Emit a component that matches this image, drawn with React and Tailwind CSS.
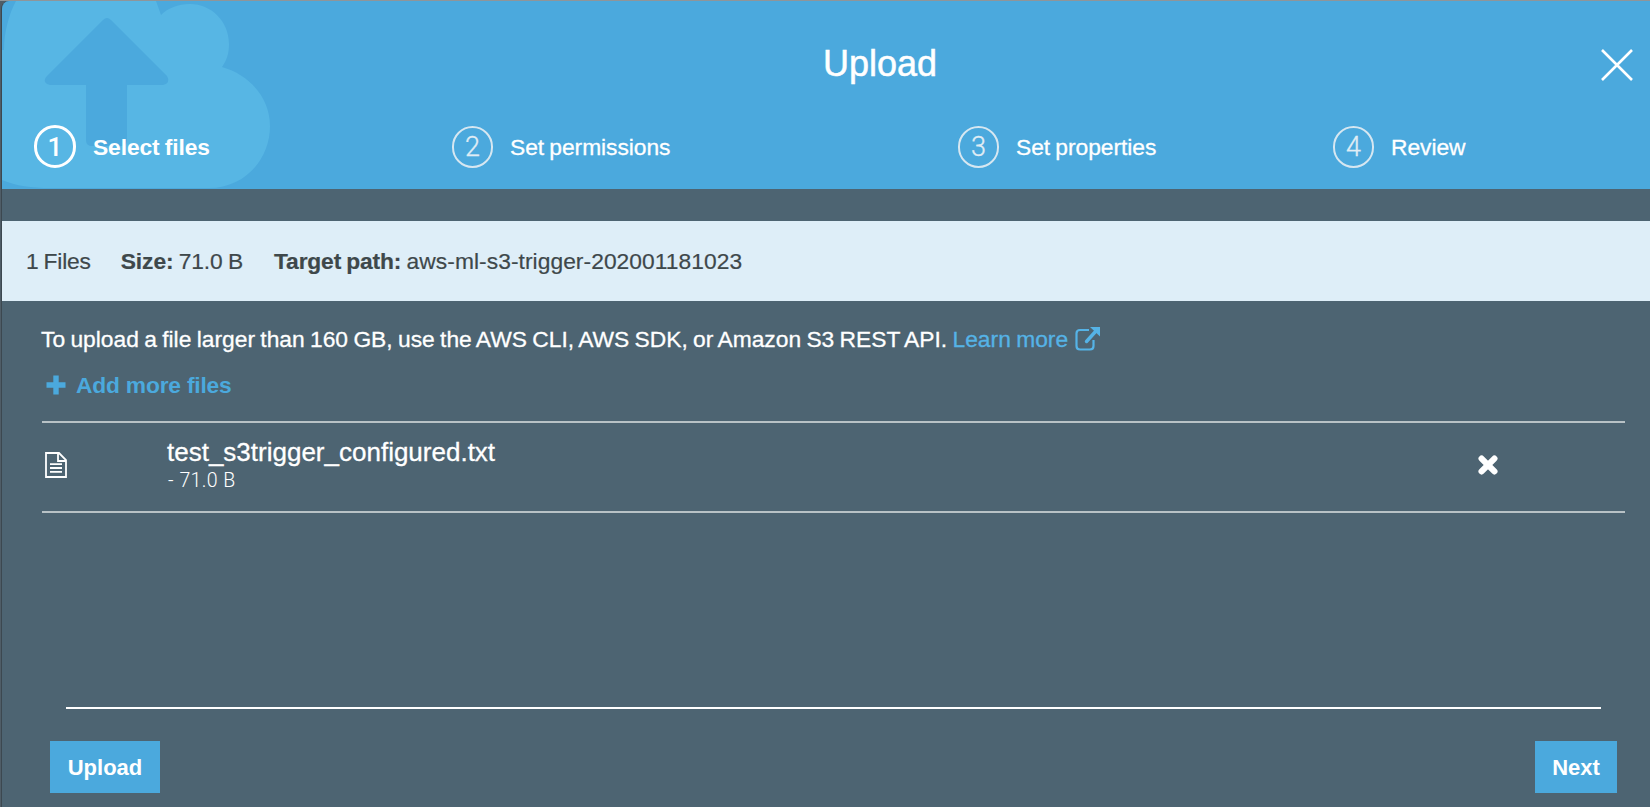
import React from "react";

const steps = [
  { n: 1, label: "Select files", active: true, cell: "w-[418px]" },
  { n: 2, label: "Set permissions", cell: "w-[506px]" },
  { n: 3, label: "Set properties", cell: "w-[375px]" },
  { n: 4, label: "Review", cell: "" },
];

function CloudMark() {
  return (
    <svg className="absolute left-0 top-0" width="280" height="188" viewBox="2 1 280 188" aria-hidden="true">
      <path
        fill="#57b6e4"
        d="M16 1 H156 L161 15 C168 8 178 4 190 4 C211 4 229 21 229 44 C229 53 227 60 222 67 C250 75 270 98 270 126 C270 160 244 188 209 188 H50 C32 188 16 186 2 180 V50 H4 C4 32 9 14 16 1 Z"
      />
      <path
        fill="#4ba9dd"
        d="M103 20 Q107 16 111 20 L167 76 Q169 79 168 82 Q166 85 163 85 H127 V140 Q127 146 121 146 H92 Q86 146 86 140 V85 H50 Q47 85 45 82 Q44 79 47 76 Z"
      />
    </svg>
  );
}

function Step({ n, label, active, cell }) {
  return (
    <li className={`flex h-11 shrink-0 items-center ${cell}`}>
      <span
        className={
          active
            ? "flex h-[43px] w-[42px] items-center justify-center rounded-full border-[3px] border-white pt-px font-['Roboto',sans-serif] text-[26px] font-medium leading-none text-white"
            : "mt-px flex h-[42px] w-[41px] items-center justify-center rounded-full border-2 border-[#d6e7f1] pt-px font-['Roboto',sans-serif] text-[27px] font-light leading-none text-[#e0edf5] [-webkit-text-stroke:0.3px]"
        }
      >
        {n}
      </span>
      <span className={active ? "ml-[17px] pt-px font-bold tracking-[-0.1px]" : "ml-[17px] pt-px tracking-[-0.05px] [-webkit-text-stroke:0.3px]"}>
        {label}
      </span>
    </li>
  );
}

export default function App() {
  return (
    <div className="h-[807px] w-full overflow-hidden border-t border-[#8f9599] bg-[#4f5d67] pl-px font-['Liberation_Sans',Arial,sans-serif] text-[22.8px] leading-[28px] text-white [word-spacing:-1px]">
      <div className="flex h-full flex-col overflow-hidden rounded-tl-lg border-l border-[#3c4850] bg-[#4d6472]">
        <header className="relative h-[188px] shrink-0 bg-[#4ba9dd]">
          <CloudMark />
          <div className="relative flex h-[123px] items-center">
            <h1 className="w-full pl-[108px] pt-[2px] text-center text-[36px] leading-[44px] [-webkit-text-stroke:0.5px]">Upload</h1>
            <button className="absolute right-[16px] top-[47px]" aria-label="Close">
              <svg width="34" height="34" viewBox="0 0 34 34" stroke="#fff" strokeWidth="2.6" fill="none">
                <path d="M2 2 L32 32 M32 2 L2 32" />
              </svg>
            </button>
          </div>
          <ol className="relative flex pl-[32px]">
            {steps.map((s) => (
              <Step key={s.n} {...s} />
            ))}
          </ol>
        </header>

        <section className="mt-8 flex h-20 shrink-0 items-center gap-[31px] bg-[#deeef8] pl-[24px] text-[#3e484b] [-webkit-text-stroke:0.2px]">
          <span className="-mr-px tracking-[-0.2px]">1 Files</span>
          <span className="tracking-[-0.1px]"><b>Size:</b> 71.0 B</span>
          <span><b className="tracking-[-0.15px]">Target path:</b> <span className="tracking-[0.05px]">aws-ml-s3-trigger-202001181023</span></span>
        </section>

        <main className="flex grow flex-col pl-[40px] pr-[25px] pt-[24px]">
          <p className="-ml-px flex items-center whitespace-pre [-webkit-text-stroke:0.3px]">
            To upload a file larger than 160 GB, use the AWS CLI, AWS SDK, or Amazon S3 REST API.{" "}
            <a className="flex items-center text-[#55b3e6]">
              Learn more
              <svg className="ml-[7px]" width="26" height="26" viewBox="0 0 26 26" fill="none" stroke="currentColor">
                <path strokeWidth="2.2" d="M14 4 H5 Q1.500 4 1.500 7.500 V20 Q1.500 23.500 5 23.500 H15 Q18.500 23.500 18.500 20 V14" />
                <path strokeWidth="3.4" strokeLinecap="round" d="M11.500 15.500 L21 5" />
                <path fill="currentColor" stroke="none" d="M15 1 H25 V10.500 Z" />
              </svg>
            </a>
          </p>
          <button className="mt-[18px] flex items-center self-start pl-[4px] font-bold text-[#4ba9dd]">
            <svg className="mr-[10px]" width="20" height="20" viewBox="0 0 20 20" stroke="currentColor" strokeWidth="5.4">
              <path d="M10 0.500 V19.500 M0.500 10 H19.500" />
            </svg>
            <span className="tracking-[-0.2px]">Add more files</span>
          </button>

          <div className="mt-[22px] flex h-[92px] items-center border-y-2 border-[#b8c2c6] pb-[5px] pl-[3px]">
            <svg width="22" height="26" viewBox="0 0 22 26" fill="none" stroke="#fff" strokeWidth="1.800">
              <path d="M1 1 H14 L21 8 V25 H1 Z M13 1 V9 H21" />
              <path d="M5 12.200 H17 M5 16 H17 M5 19.800 H17" />
            </svg>
            <div className="ml-[100px] grow">
              <div className="text-[26px] leading-[30px] [-webkit-text-stroke:0.3px]">test_s3trigger_configured.txt</div>
              <div className="pl-px pt-[3px] font-['Roboto',sans-serif] text-[19.5px] font-light leading-[22px] tracking-[0.3px] [word-spacing:0.5px]">- 71.0 B</div>
            </div>
            <button className="mr-[127px]" aria-label="Remove">
              <svg width="20" height="20" viewBox="0 0 20 20" stroke="#fff" strokeWidth="6.200" strokeLinecap="round">
                <path d="M3.600 3.600 L16.400 16.400 M16.400 3.600 L3.600 16.400" />
              </svg>
            </button>
          </div>
        </main>

        <footer className="shrink-0 pb-[14px] pl-[48px] pr-[33px]">
          <div className="mb-8 ml-[16px] mr-[16px] h-[2px] bg-white" />
          <div className="flex justify-between text-[22px] font-bold">
            <button className="h-[52px] w-[110px] bg-[#4ba9dd] pt-[2px]">Upload</button>
            <button className="h-[52px] w-[82px] bg-[#4ba9dd] pt-[2px]">Next</button>
          </div>
        </footer>
      </div>
    </div>
  );
}
